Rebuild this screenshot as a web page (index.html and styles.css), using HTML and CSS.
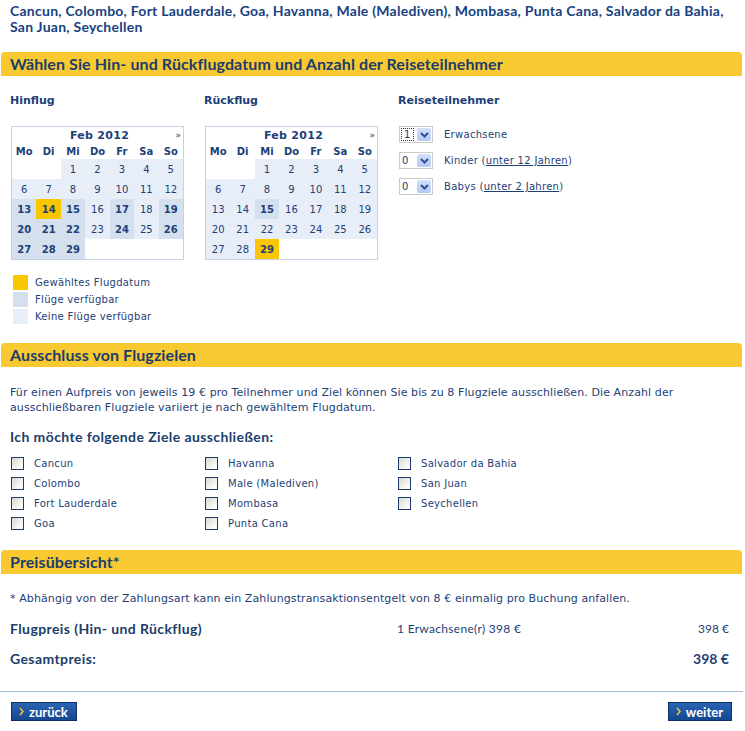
FILE: index.html
```html
<!DOCTYPE html>
<html lang="de">
<head>
    <meta charset="UTF-8">
    <title>Flugauswahl</title>
    <link rel="stylesheet" href="styles.css">
</head>
<body>
<div class="page">

    <p class="dest">Cancun, Colombo, Fort Lauderdale, Goa, Havanna, Male (Malediven), Mombasa, Punta Cana, Salvador da Bahia, San Juan, Seychellen</p>

    <h2 class="bar">Wählen Sie Hin- und Rückflugdatum und Anzahl der Reiseteilnehmer</h2>

    <div class="dates">
        <div class="col">
            <h3>Hinflug</h3>
            <div class="cal">
                <div class="cal-head"><span></span><span class="month">Feb 2012</span><span class="next">»</span></div>
                <table>
                    <tr><th>Mo</th><th>Di</th><th>Mi</th><th>Do</th><th>Fr</th><th>Sa</th><th>So</th></tr>
                    <tr><td class="e"></td><td class="e"></td><td class="n">1</td><td class="n">2</td><td class="n">3</td><td class="n">4</td><td class="n">5</td></tr>
                    <tr><td class="n">6</td><td class="n">7</td><td class="n">8</td><td class="n">9</td><td class="n">10</td><td class="n">11</td><td class="n">12</td></tr>
                    <tr><td class="a">13</td><td class="s">14</td><td class="a">15</td><td class="n">16</td><td class="a">17</td><td class="n">18</td><td class="a">19</td></tr>
                    <tr><td class="a">20</td><td class="a">21</td><td class="a">22</td><td class="n">23</td><td class="a">24</td><td class="n">25</td><td class="a">26</td></tr>
                    <tr><td class="a">27</td><td class="a">28</td><td class="a">29</td><td class="e"></td><td class="e"></td><td class="e"></td><td class="e"></td></tr>
                </table>
            </div>
        </div>

        <div class="col">
            <h3>Rückflug</h3>
            <div class="cal">
                <div class="cal-head"><span></span><span class="month">Feb 2012</span><span class="next">»</span></div>
                <table>
                    <tr><th>Mo</th><th>Di</th><th>Mi</th><th>Do</th><th>Fr</th><th>Sa</th><th>So</th></tr>
                    <tr><td class="e"></td><td class="e"></td><td class="n">1</td><td class="n">2</td><td class="n">3</td><td class="n">4</td><td class="n">5</td></tr>
                    <tr><td class="n">6</td><td class="n">7</td><td class="n">8</td><td class="n">9</td><td class="n">10</td><td class="n">11</td><td class="n">12</td></tr>
                    <tr><td class="n">13</td><td class="n">14</td><td class="a">15</td><td class="n">16</td><td class="n">17</td><td class="n">18</td><td class="n">19</td></tr>
                    <tr><td class="n">20</td><td class="n">21</td><td class="n">22</td><td class="n">23</td><td class="n">24</td><td class="n">25</td><td class="n">26</td></tr>
                    <tr><td class="n">27</td><td class="n">28</td><td class="s">29</td><td class="e"></td><td class="e"></td><td class="e"></td><td class="e"></td></tr>
                </table>
            </div>
        </div>

        <div class="col">
            <h3>Reiseteilnehmer</h3>
            <div class="pax">
                <div class="pax-row">
                    <span class="sel"><span class="val"><span class="focus">1</span></span><span class="arr"><svg width="9" height="6" viewBox="0 0 9 6"><path d="M1 1l3.5 3.5L8 1" fill="none" stroke="#2f4f8f" stroke-width="2"/></svg></span></span>
                    Erwachsene
                </div>
                <div class="pax-row">
                    <span class="sel"><span class="val">0</span><span class="arr"><svg width="9" height="6" viewBox="0 0 9 6"><path d="M1 1l3.5 3.5L8 1" fill="none" stroke="#2f4f8f" stroke-width="2"/></svg></span></span>
                    <span>Kinder (<a href="#">unter 12 Jahren</a>)</span>
                </div>
                <div class="pax-row">
                    <span class="sel"><span class="val">0</span><span class="arr"><svg width="9" height="6" viewBox="0 0 9 6"><path d="M1 1l3.5 3.5L8 1" fill="none" stroke="#2f4f8f" stroke-width="2"/></svg></span></span>
                    <span>Babys (<a href="#">unter 2 Jahren</a>)</span>
                </div>
            </div>
        </div>
    </div>

    <ul class="legend">
        <li><span class="sw s"></span>Gewähltes Flugdatum</li>
        <li><span class="sw a"></span>Flüge verfügbar</li>
        <li><span class="sw n"></span>Keine Flüge verfügbar</li>
    </ul>

    <h2 class="bar">Ausschluss von Flugzielen</h2>

    <p class="info">Für einen Aufpreis von jeweils 19 € pro Teilnehmer und Ziel können Sie bis zu 8 Flugziele ausschließen. Die Anzahl der ausschließbaren Flugziele variiert je nach gewähltem Flugdatum.</p>

    <h4>Ich möchte folgende Ziele ausschließen:</h4>

    <div class="excl">
        <label><span class="cb"></span>Cancun</label>
        <label><span class="cb"></span>Havanna</label>
        <label><span class="cb"></span>Salvador da Bahia</label>
        <label><span class="cb"></span>Colombo</label>
        <label><span class="cb"></span>Male (Malediven)</label>
        <label><span class="cb"></span>San Juan</label>
        <label><span class="cb"></span>Fort Lauderdale</label>
        <label><span class="cb"></span>Mombasa</label>
        <label><span class="cb"></span>Seychellen</label>
        <label><span class="cb"></span>Goa</label>
        <label><span class="cb"></span>Punta Cana</label>
    </div>

    <h2 class="bar">Preisübersicht*</h2>

    <p class="info note">* Abhängig von der Zahlungsart kann ein Zahlungstransaktionsentgelt von 8 € einmalig pro Buchung anfallen.</p>

    <div class="price">
        <span class="plabel">Flugpreis (Hin- und Rückflug)</span>
        <span class="pdetail">1 Erwachsene(r) 398 €</span>
        <span class="pvalue">398 €</span>
    </div>
    <div class="price total">
        <span class="plabel">Gesamtpreis:</span>
        <span class="pdetail"></span>
        <span class="pvalue">398 €</span>
    </div>

    <hr class="sep">

    <div class="nav">
        <a class="btn" href="#"><svg width="5" height="9" viewBox="0 0 5 9"><path d="M1 1l3 3.5L1 8" fill="none" stroke="#f9c931" stroke-width="1.4"/></svg>zurück</a>
        <a class="btn" href="#"><svg width="5" height="9" viewBox="0 0 5 9"><path d="M1 1l3 3.5L1 8" fill="none" stroke="#f9c931" stroke-width="1.4"/></svg>weiter</a>
    </div>

</div>
</body>
</html>
```

FILE: styles.css
```css
body {
    margin: 0;
    background: #fff;
    color: #1d4177;
    font-family: "DejaVu Sans", Verdana, sans-serif;
    font-size: 10px;
}

.page {
    width: 741px;
    margin-left: 1px;
}

.dest {
    margin: 0;
    padding: 3px 2px 0 9px;
    font: bold 14px/16px Lato, sans-serif;
    letter-spacing: 0.25px;
    color: #17427f;
}

/* yellow section headers */
.bar {
    margin: 17px 0 0;
    height: 24px;
    padding: 0 9px;
    background: #f9c931;
    border-radius: 4px 4px 0 0;
    font: bold 16px/24px Lato, sans-serif;
    letter-spacing: 0.1px;
    color: #1c3d6c;
}

.dates {
    display: flex;
    padding-left: 9px;
    margin-top: 17px;
}

.col {
    width: 194px;
}

.col h3 {
    margin: 0;
    font-size: 11px;
    line-height: 16px;
    font-weight: bold;
    color: #1d4177;
}

/* calendar */
.cal {
    margin-top: 17px;
    margin-left: 1px;
    width: 171px;
    border: 1px solid #c4d2e4;
    background: #fff;
}

.cal-head {
    display: grid;
    grid-template-columns: 1fr auto 1fr;
    align-items: center;
    height: 16px;
}

.cal-head .month {
    font-size: 11px;
    font-weight: bold;
    letter-spacing: 0.3px;
    padding-left: 4px;
}

.cal-head .next {
    justify-self: end;
    padding-right: 2px;
    font-size: 9px;
    color: #1c3d6c;
}

.cal table {
    width: 171px;
    border-collapse: collapse;
    table-layout: fixed;
}

.cal th {
    height: 16px;
    padding: 0;
    font-size: 10px;
    font-weight: bold;
}

.cal td {
    height: 20px;
    padding: 0;
    text-align: center;
    font-size: 10px;
}

.cal td.e { background: #fff; }
.cal td.n { background: #e8eef7; }
.cal td.a { background: #d5e0ef; font-weight: bold; }
.cal td.s { background: #f9c600; font-weight: bold; }

/* passenger selects */
.pax {
    margin-top: 17px;
}

.pax-row {
    display: flex;
    align-items: center;
    height: 17px;
    margin-bottom: 9px;
    font-size: 10px;
    letter-spacing: 0.3px;
}

.pax-row a {
    color: #1d4177;
}

.sel {
    display: flex;
    align-items: center;
    width: 32px;
    height: 15px;
    margin: 0 11px 0 1px;
    padding: 0;
    border: 1px solid #cbcbcb;
    background: #fff;
}

.sel .val {
    width: 16px;
    padding-left: 2px;
    font-size: 10px;
    color: #1d3d6a;
}

.sel .focus {
    outline: 1px dotted #333;
    padding: 0 2px;
}

.sel .arr {
    display: flex;
    align-items: center;
    justify-content: center;
    width: 14px;
    height: 13px;
    margin-left: auto;
    margin-right: 1px;
    background: linear-gradient(#d3e0fc, #b4c9f4);
    border-radius: 2px;
}

/* legend */
.legend {
    list-style: none;
    margin: 15px 0 0;
    padding: 0 0 0 12px;
}

.legend li {
    display: flex;
    align-items: center;
    height: 15px;
    margin-bottom: 2px;
    font-size: 10px;
    letter-spacing: 0.3px;
}

.sw {
    width: 15px;
    height: 15px;
    margin-right: 7px;
}

.sw.s { background: #f9c600; }
.sw.a { background: #d5e0ef; }
.sw.n { background: #e8eef7; }

.legend + .bar {
    margin-top: 19px;
}

.info {
    margin: 18px 0 0;
    padding: 0 9px;
    font-size: 11px;
    letter-spacing: 0.1px;
    line-height: 15px;
}

h4 {
    margin: 14px 0 0;
    padding: 0 9px;
    font: bold 14px/16px Lato, sans-serif;
    letter-spacing: 0.4px;
    color: #1c3d6c;
}

/* excluded destinations */
.excl {
    display: grid;
    grid-template-columns: 194px 193px auto;
    margin-top: 8px;
    padding-left: 10px;
}

.excl label {
    display: flex;
    align-items: center;
    height: 20px;
    font-size: 10px;
    letter-spacing: 0.3px;
}

.cb {
    width: 11px;
    height: 11px;
    margin-right: 10px;
    border: 1px solid #1c3d6c;
    background: linear-gradient(135deg, #d9d9d2, #f7f7f4 70%, #fff);
}

.excl + .bar {
    margin-top: 17px;
}

.note {
    margin-top: 17px;
}

/* price summary */
.price {
    display: grid;
    grid-template-columns: 387px 1fr auto;
    align-items: center;
    height: 16px;
    margin-top: 14px;
    padding: 0 13px 0 9px;
}

.price.total {
    margin-top: 14px;
}

.plabel {
    font: bold 14px Lato, sans-serif;
    letter-spacing: 0.4px;
    color: #1c3d6c;
}

.pdetail {
    font: 12px Lato, sans-serif;
    letter-spacing: 0.3px;
}

.pvalue {
    font: 12px Lato, sans-serif;
}

.total .pvalue {
    font: bold 14px Lato, sans-serif;
}

.sep {
    margin: 25px 0 0 -1px;
    width: 743px;
    height: 0;
    border: 0;
    border-top: 1px solid #a9bbd4;
}

.nav {
    display: flex;
    justify-content: space-between;
    margin-top: 10px;
    padding: 0 10px 0 10px;
}

.btn {
    display: inline-flex;
    align-items: center;
    gap: 5px;
    height: 17px;
    padding: 0 8px 0 7px;
    background: linear-gradient(#2b63b2, #154891);
    border: 1px solid #0d306b;
    color: #fff;
    font: bold 13px Lato, sans-serif;
    text-decoration: none;
}
```
